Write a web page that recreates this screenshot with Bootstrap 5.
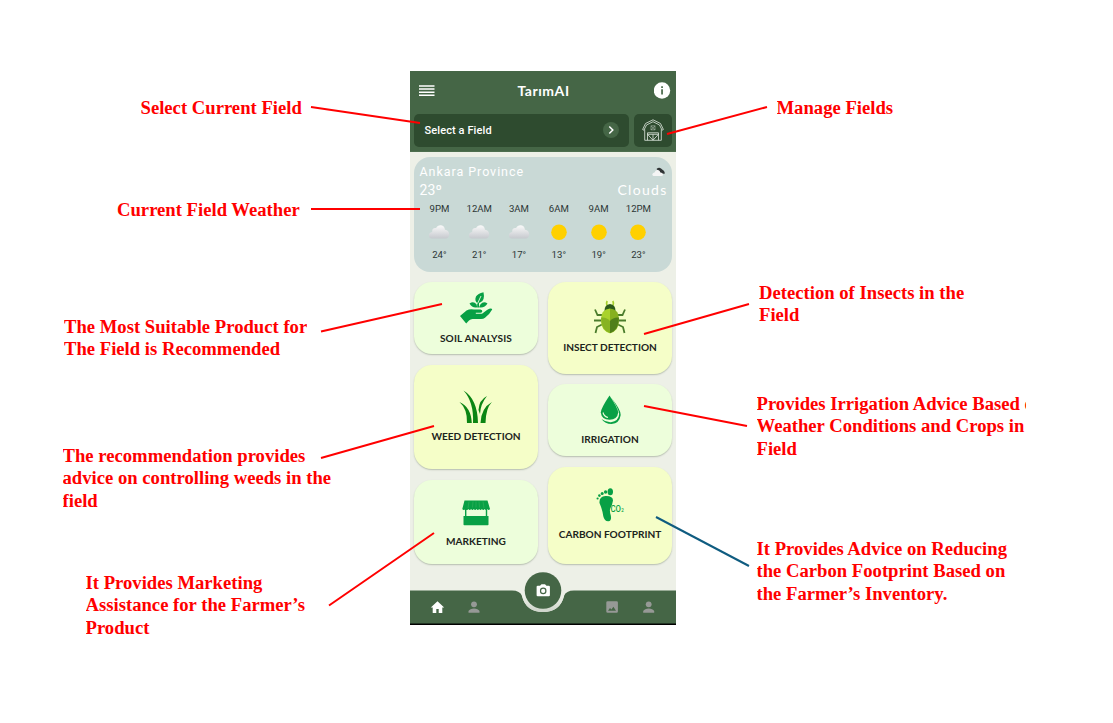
<!DOCTYPE html>
<html lang="en">
<head>
<meta charset="utf-8">
<meta name="viewport" content="width=device-width, initial-scale=1">
<title>TarımAI</title>
<link href="https://cdn.jsdelivr.net/npm/bootstrap@5.3.0/dist/css/bootstrap.min.css" rel="stylesheet">
<style>
body{width:1113px;height:723px;overflow:hidden;background:#fff;font-family:"Lato","Roboto",sans-serif}
.phone{width:266px;height:554px;margin:71px 0 0 410px;background:#edf0e7;overflow:hidden}
.phone svg{display:block;flex:none}
.top{height:81px;background:#456646;padding:0 4px;border-bottom:1px solid #4d6e4e}
.title-row{height:42.5px;padding:0 1px 3px 5px}
.app-title{font:700 14px/20px "Lato",sans-serif;letter-spacing:.55px;margin-right:2px}
.picker{height:33px;width:215px;background:#2e4b2f;border-radius:5px;padding:0 10.5px;font:500 11px/33px "Roboto",sans-serif;letter-spacing:.1px}
.barn{width:38px;height:33px;background:#2e4b2f;border-radius:5px}
.chev{width:16px;height:16px;background:#456646;border-radius:50%}
.weather{height:114.5px;margin:5px 4px 0;background:#c9d9d6;border-radius:16px;padding:5px 5.5px 0;color:#fff;font-family:"Roboto",sans-serif}
.place{font-size:12.5px;line-height:19px;letter-spacing:.95px}
.now{font-size:14px;line-height:19px;letter-spacing:.1px}
.clouds{font:400 14px/18px "Lato",sans-serif;letter-spacing:1.3px}
.hours{margin-top:3px;color:#2c3635;font-size:9.6px}
.hour{width:39.8px;height:58px;line-height:12px;flex:none}
.tiles{padding:10.5px 4px 0 4px;height:292.5px}
.tile-col{width:124px}
.tile{border-radius:18px;background:#edfedb;box-shadow:0 1px 1.5px rgba(60,80,50,.3);color:#1c241c;font:700 10.1px/14px "Lato",sans-serif;letter-spacing:0;white-space:nowrap}
.tile.y{background:#f5fec8}
.dock{height:61.5px}
.note{position:absolute;color:#f00;font:700 18.67px/22.25px "Liberation Serif",serif;white-space:nowrap;overflow:hidden}
.leaders{position:absolute;left:0;top:0;pointer-events:none}
</style>
</head>
<body class="position-relative">
<main class="phone d-inline-block align-top">
  <header class="top text-white">
    <div class="title-row d-flex align-items-center justify-content-between">
      <svg width="16" height="12" viewBox="0 0 16 12"><path d="M0 1h15.500M0 4.100h15.500M0 7.200h15.500M0 10.300h15.500" stroke="#fff" stroke-width="1.500"/></svg>
      <div class="app-title">TarımAI</div>
      <svg width="17" height="17" viewBox="0 0 17 17"><circle cx="8" cy="8.500" r="8.200" fill="#fff"/><path d="M7.200 4.300h1.700v1.800H7.200zM7.200 7.300h1.700v5.200H7.200z" fill="#456646"/></svg>
    </div>
    <div class="d-flex justify-content-between">
      <div class="picker d-flex align-items-center justify-content-between"><span>Select a Field</span>
        <span class="chev d-flex align-items-center justify-content-center"><svg width="8" height="10" viewBox="0 0 8 10"><path d="M2.300 1.500 5.800 5 2.300 8.500" stroke="#fff" stroke-width="1.500" fill="none"/></svg></span></div>
      <div class="barn d-flex align-items-center justify-content-center">
        <svg width="22" height="22" viewBox="0 0 22 22" fill="none" stroke="#dfe8df" stroke-width=".8"><path d="M.6 10.500 3.500 4.500 11 .8 18.500 4.500l2.900 6-1.300.7L17.500 6 11 2.700 4.500 6 1.900 11.200zM2.700 10.500V21.300h16.600V10.500M5.500 21.300v-7.500h11v7.500M5.500 15.300h11M11 15.300v6M5.700 15.500 10.800 21M16.300 15.500 11.200 21"/><path stroke-width=".6" opacity=".7" d="M9 6.800h4v4H9zM9 6.800l4 4M13 6.800l-4 4"/></svg>
      </div>
    </div>
  </header>

  <section class="weather">
    <div class="d-flex justify-content-between align-items-center place"><span>Ankara Province</span>
      <svg width="14" height="10" viewBox="0 0 14 10" style="margin-right:1px"><path d="M4.500 2Q7-.3 9 1.500 12.500 3.500 13 6.500L9.500 7z" fill="#303435"/><path d="M2.500 9Q0 9 .4 7 1 5.500 2.500 5.500 3.500 2.500 6 3 8 3.300 8.300 5.500 11 5.600 11 7.500 11 9 9.500 9z" fill="#f5f5f5"/></svg></div>
    <div class="d-flex justify-content-between now"><span>23º</span><span class="clouds" style="margin-right:-1px">Clouds</span></div>
    <div class="hours d-flex" id="hours"></div>
  </section>

  <section class="tiles d-flex justify-content-between align-items-start">
    <div class="tile-col d-flex flex-column">
      <div class="tile d-flex flex-column align-items-center" style="height:72px;padding-top:9px">
        <svg width="34" height="34" viewBox="0 0 34 34" fill="#08a045"><path d="M1 25 7.500 19.500Q11 17.500 15 18.500h6.500q2 .3 1.800 2-.3 1.300-2 1.300h-4.500v.9h6.200L28 19q4.500-2.500 5.200-.5-2.700 5-7.200 8.200-1.500 1.300-4 1.300H13.500q-2 .3-3.500 1.600L7.200 32.500z"/><path d="M18.200 16.500V12Q15.300 9.500 17 5.500 18.700 2.500 24.500 1.200 26.200 9 21.500 11.300L20 12v4.500z"/><path d="M10.500 12.500q4-2.700 7 .7l.7 3q-5 1-7.700-3.700M28.500 12.500q-4-2.700-7 .7l-1.500 3q5.500 1 8.500-3.700"/><path d="M18.500 12.500 22 5" stroke="#edfedb" stroke-width=".9"/></svg>
        <span style="margin-top:5.500px;letter-spacing:.15px">SOIL ANALYSIS</span></div>
      <div class="tile y d-flex flex-column align-items-center" style="height:104.500px;margin-top:10.500px;padding-top:25px">
        <svg width="34" height="34" viewBox="0 0 34 34" fill="#0b8514"><path d="M14 33Q15 12 4.500.5 18.500 9 19 33zM8 33Q8.500 19 .5 12 12 17 12.800 33zM21.500 33Q22 18 33 12 26.800 18 26.500 33zM19.500 20Q20 10 28 6 21.500 14 21 24z"/></svg>
        <span style="margin-top:5.500px">WEED DETECTION</span></div>
      <div class="tile d-flex flex-column align-items-center" style="height:84px;margin-top:11px;padding-top:18.500px">
        <svg width="30" height="28" viewBox="0 0 30 28"><path d="M3.500 1.500h23L29 10q-1.200 2-2.700 0-1.400 2-2.700 0-1.400 2-2.700 0-1.400 2-2.700 0-1.400 2-2.700 0-1.400 2-2.700 0-1.400 2-2.700 0-1.400 2-2.700 0-1.400 2-2.700 0Q2.500 12 1.300 10zM4 10h1.400v7.500H4zM24.800 10h1.400v7.500h-1.400zM2.500 17h25V25.500q0 .8-.8.8H3.300q-.8 0-.8-.8z" fill="#08a045"/><path d="M8 2.500 7 9M12 2.500l-.5 6M15 2.500v6M18 2.500l.5 6M22 2.500l1 6.500" stroke="#4fba69" stroke-width=".4"/></svg>
        <span style="margin-top:7.500px">MARKETING</span></div>
    </div>
    <div class="tile-col d-flex flex-column">
      <div class="tile y d-flex flex-column align-items-center" style="height:91.500px;padding-top:18px">
        <svg width="34" height="36" viewBox="0 0 34 36"><g fill="none" stroke="#4a7c2c" stroke-width="1.800"><path d="M9 15H4.500L2 9.500M8.500 20.500H1M9 24.500l-5 2.500-1.500 6M25 15h4.500L32 9.500M25.500 20.500H33M25 24.500l5 2.500 1.500 6"/></g><path d="M14 5.500Q13 3 14.200 1M20 5.500Q21 3 19.800 1" stroke="#a4cf29" stroke-width="1.700" fill="none"/><path d="M11.500 11Q11.500 4.500 17 4 22.500 4.500 22.500 11z" fill="#2c5a1a"/><path d="M17 8.500Q8 9 8 20T17 33.200z" fill="#a9d22b"/><path d="M17 8.500q9 .5 9 11.500T17 33.200z" fill="#86b020"/><path d="M8 17.500q6-.5 9 3.500v12.200Q8 30 8 17.500" fill="#87b322"/><path d="M26 17.500q-6-.5-9 3.500v12.200q9-3.200 9-15.700" fill="#507f19"/></svg>
        <span style="margin-top:4px">INSECT DETECTION</span></div>
      <div class="tile d-flex flex-column align-items-center" style="height:72px;margin-top:10.500px;padding-top:11px">
        <svg width="23" height="30" viewBox="0 0 23 30"><path d="M12.500 3Q22 15 21.700 20 20.500 28.500 12.500 29 6 29 2.500 24 7 27.500 12 27.200 19.700 26 20.200 19 19.500 13.500 12.500 3" fill="#08a045"/><path d="M10.500.5Q1.800 13.500 1.800 17.500q.8 7.200 8.700 7.200T19.200 17.500Q19.200 13.500 10.500.5" fill="#08a045"/><path d="M4 17.500q1 4 5 5" stroke="#edfedb" stroke-width="1.100" fill="none"/></svg>
        <span style="margin-top:7px">IRRIGATION</span></div>
      <div class="tile y d-flex flex-column align-items-center" style="height:97px;margin-top:11px;padding-top:20px">
        <svg width="30" height="36" viewBox="0 0 30 36" fill="#08a045"><path d="M4.500 16Q4 9.500 10.500 9q7.500-.3 7.500 4.500-.5 4-2.800 8-.8 2.500.5 6.500 1.300 5.500-2.200 6.200-4 .3-5.200-5Q7.500 23 4.500 16"/><ellipse cx="15.300" cy="4.700" rx="2.700" ry="3.500"/><circle cx="10.600" cy="5" r="1.700"/><circle cx="7.200" cy="6.500" r="1.500"/><circle cx="4.400" cy="8.600" r="1.300"/><circle cx="2.600" cy="11.500" r="1.100"/><text x="15.500" y="24.500" font-family="Roboto" font-weight="500" font-size="8.500" textLength="10.500" lengthAdjust="spacingAndGlyphs">CO</text><text x="26.300" y="25" font-family="Roboto" font-weight="500" font-size="4.500">2</text></svg>
        <span style="margin-top:4px">CARBON FOOTPRINT</span></div>
    </div>
  </section>

  <nav class="dock">
    <svg width="266" height="61.500" viewBox="0 -1.500 266 61.500">
      <defs><linearGradient id="rg" x2="0" y2="1"><stop offset=".3" stop-color="#edf0e7"/><stop offset="1" stop-color="#cdd3ca"/></linearGradient></defs>
      <path d="M0 25H102Q110 25 112 30.500 116 46.500 133 46.500T154 30.500Q156 25 164 25H266V61H0z" fill="#456646"/>
      <path d="M112 30.500Q116 46.500 133 46.500T154 30.500V24.500H112z" fill="url(#rg)"/>
      <circle cx="133" cy="25" r="18.300" fill="#456646"/>
      <path d="M127.800 20.300h2.200l1.500-1.500h3.500l1.500 1.500h2.200q1.200 0 1.200 1v8.400q0 1.100-1.200 1.100H127.800q-1.200 0-1.200-1.100v-8.400q0-1 1.200-1" fill="#fff"/><circle cx="133.200" cy="25.400" r="2.700" fill="none" stroke="#456646" stroke-width="1.200"/>
      <path d="M20.800 42 27.500 35.700l6.700 6.300h-1.900v5.500h-3.600v-4h-2.400v4h-3.600V42z" fill="#fff"/>
      <g fill="#969996"><g id="person"><circle cx="64" cy="38.800" r="2.900"/><path d="M58.500 47.300v-1.700q1.500-2.700 5.500-2.700t5.500 2.700v1.700z"/></g><use href="#person" x="174.700"/>
      <path fill-rule="evenodd" d="M197.600 35.800h9q1.300 0 1.300 1.300v8.900q0 1.300-1.300 1.300h-9q-1.300 0-1.300-1.300v-8.900q0-1.300 1.300-1.300m.4 9.500h8l-2.600-4-2 2.800-1.400-1.500z"/></g>
      <path d="M0 57.900h266V61H0z" fill="#000"/>
    </svg>
  </nav>
</main>

<div class="note" style="left:140.500px;top:97px">Select Current Field</div>
<div class="note" style="left:117px;top:199px">Current Field Weather</div>
<div class="note" style="left:64px;top:316px">The Most Suitable Product for<br>The Field is Recommended</div>
<div class="note" style="left:62.500px;top:445px">The recommendation provides<br>advice on controlling weeds in the<br>field</div>
<div class="note" style="left:85.500px;top:572px">It Provides Marketing<br>Assistance for the Farmer’s<br>Product</div>
<div class="note" style="left:776.500px;top:97px">Manage Fields</div>
<div class="note" style="left:759px;top:282px">Detection of Insects in the<br>Field</div>
<div class="note" style="left:756.500px;top:393px;width:269px">Provides Irrigation Advice Based on<br>Weather Conditions and Crops in<br>Field</div>
<div class="note" style="left:756.500px;top:538px">It Provides Advice on Reducing<br>the Carbon Footprint Based on<br>the Farmer’s Inventory.</div>

<svg class="leaders" width="1113" height="723" fill="none" stroke="#f00" stroke-width="2"><path d="M311 107 420 123M311 209H420M321 331.500 442 304M321 458 434 426M329 605.500 434 533M767 107 667 134M749 304 644 334M747 426 644 406"/><path d="M749 566 656 517" stroke="#0f5c80"/></svg>

<svg width="0" height="0" class="position-absolute"><defs><linearGradient id="cg" x2="0" y2="1"><stop stop-color="#fafafa"/><stop offset="1" stop-color="#c6c9ce"/></linearGradient>
<symbol id="cloud" viewBox="0 0 22 16"><path d="M4 14.500C0 14.500-.3 8.500 4.200 8 3.800 5 6 3.700 8 4.200 9.500.2 16.500-.2 17 5.800 22.500 6 22.500 14.500 17.500 14.500z" fill="url(#cg)"/></symbol>
<symbol id="sun" viewBox="0 0 22 16"><circle cx="11" cy="8.200" r="7.800" fill="#ffd000"/></symbol></defs></svg>

<script src="https://cdn.jsdelivr.net/npm/bootstrap@5.3.0/dist/js/bootstrap.bundle.min.js"></script>
<script>
document.getElementById('hours').innerHTML=[['9PM','cloud',24],['12AM','cloud',21],['3AM','cloud',17],['6AM','sun',13],['9AM','sun',19],['12PM','sun',23]]
.map(function(h){return '<div class="hour d-flex flex-column align-items-center justify-content-between"><span>'+h[0]+'</span><svg width="22" height="16"><use href="#'+h[1]+'"/></svg><span>'+h[2]+'°</span></div>'}).join('');
</script>
</body>
</html>
